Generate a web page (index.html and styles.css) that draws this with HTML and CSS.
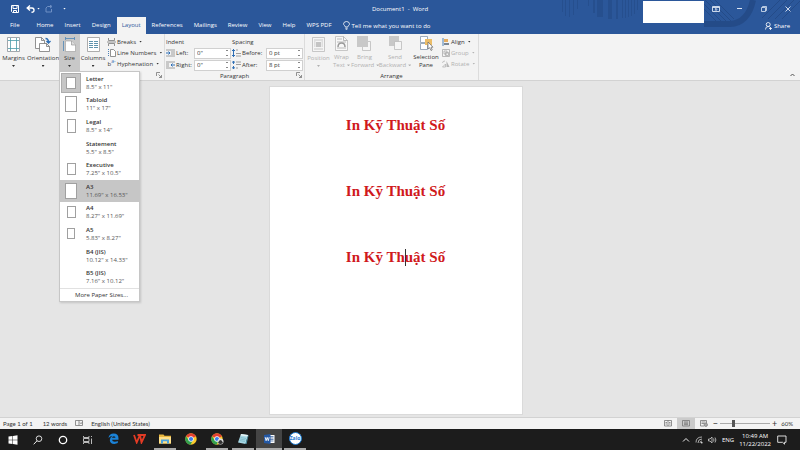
FILE: index.html
```html
<!DOCTYPE html>
<html lang="en">
<head>
    <meta charset="UTF-8">
    <meta name="viewport" content="width=device-width, initial-scale=1.0">
    <title>Document1 - Word</title>
    <link rel="stylesheet" href="styles.css">
</head>
<body>
    <header class="app-header">
        <svg class="header-art" viewBox="0 0 250 34" aria-hidden="true">
            <g stroke="#264f8e">
                <path d="M12.500 0v12M15.500 0v16M19.500 0v17M23.500 0v15M27.500 0v9M38.500 0v6M72.500 0v18M75.500 0v18M78.500 0v17M81.500 0v16M84.500 0v14M87.500 0v10"/>
                <path stroke-width="6" d="M50 0v17"/>
                <path stroke-width="4" d="M60 0v19"/>
                <path stroke-width="2" d="M44 0v13M67 0v19"/>
            </g>
            <path fill="none" stroke="#244b88" stroke-width="6" d="M154 24h26q18-1 23-24"/>
            <path stroke="#244b88" d="M154 9l13 13M154 4l18 18M155 0l22 22M160 0l21 21M165 0l19 19M212 18L230 0M218 19L237 0M225 19L244 0M232 19L250 1"/>
        </svg>
        <div class="account-box"></div>

        <div class="title-bar">
            <div class="quick-access">
                <button type="button" aria-label="Save"><svg width="8" height="8" viewBox="0 0 8 8"><path fill="none" stroke="#fff" d="M.5.5h7v7h-6l-1-1zM2 1v2.500h4V1M2.500 7.500V5.500h3v2"/></svg></button>
                <button type="button" class="undo" aria-label="Undo"><svg width="9" height="8" viewBox="0 0 9 8"><path fill="none" stroke="#fff" stroke-width="1.400" d="M4 .5L1.200 3 4 5.500M1.500 3H6q2 0 2 2.200T5.500 7.300"/></svg><i class="caret"></i></button>
                <button type="button" class="redo" aria-label="Repeat"><svg width="8" height="8" viewBox="0 0 8 8"><path fill="none" stroke="#6f90c4" d="M6 1.500H2.500L1 3v4h5.500V4M5 0l2 1.500L5 3"/></svg></button>
                <button type="button" class="customize" aria-label="Customize Quick Access Toolbar"><i class="caret"></i></button>
            </div>
            <div class="doc-title">Document1&nbsp; -&nbsp; Word</div>
            <div class="window-buttons">
                <button type="button" aria-label="Ribbon Display Options"><svg width="8" height="8" viewBox="0 0 8 8"><path fill="none" stroke="#dce5f3" d="M.5 1.500h7v5h-7zM.5 2.500h7M4 6V3.500M2.800 4.700L4 3.500l1.200 1.200" stroke-width=".9"/></svg></button>
                <button type="button" aria-label="Minimize"><svg width="8" height="8" viewBox="0 0 8 8"><path stroke="#dce5f3" d="M1 3.500h5"/></svg></button>
                <button type="button" aria-label="Restore Down"><svg width="8" height="8" viewBox="0 0 8 8"><path fill="none" stroke="#dce5f3" stroke-width=".8" d="M1.500 2.500h4v4h-4zM2.500 2.500v-1h4v4h-1"/></svg></button>
                <button type="button" aria-label="Close"><svg width="8" height="8" viewBox="0 0 8 8"><path stroke="#dce5f3" stroke-width=".9" d="M1.500 1.500l5 5M6.500 1.500l-5 5"/></svg></button>
            </div>
        </div>

        <nav class="tabs">
            <a href="#file" class="file-tab">File</a>
            <a href="#home">Home</a>
            <a href="#insert">Insert</a>
            <a href="#design">Design</a>
            <a href="#layout" class="active">Layout</a>
            <a href="#references">References</a>
            <a href="#mailings">Mailings</a>
            <a href="#review">Review</a>
            <a href="#view">View</a>
            <a href="#help">Help</a>
            <a href="#wps">WPS PDF</a>
            <button type="button" class="tell-me"><svg width="7" height="9" viewBox="0 0 7 9"><path fill="none" stroke="#fff" stroke-width=".8" d="M2.300 6Q2.200 5 1.300 4.300.5 3.500.5 2.900.8.500 3.500.500T6.500 2.900q0 .9-.8 1.600Q4.800 5 4.700 6zM2.300 7.200h2.400M2.700 8.300h1.600"/></svg>Tell me what you want to do</button>
            <button type="button" class="share"><svg width="7" height="8" viewBox="0 0 7 8"><g fill="none" stroke="#fff" stroke-width=".8"><circle cx="3.200" cy="2.500" r="2"/><path d="M.5 7.500q0-3 2.700-3 1.300 0 2 .8M4 6.500h3M5.500 5v3"/></g></svg>Share</button>
        </nav>
    </header>

    <section class="ribbon">
        <div class="group page-setup">
            <div class="group-body">
                <button type="button" class="big margins"><svg width="13" height="15" viewBox="0 0 13 15"><path fill="#fff" stroke="#8b9299" stroke-width=".8" d="M.5.500h12v14H.500z"/><path fill="none" stroke="#4a9aa8" stroke-width=".8" d="M3.500 1v13M9.500 1v13M1 3.500h11M1 11.500h11"/></svg>Margins<i class="caret"></i></button>
                <button type="button" class="big orientation"><svg width="16" height="15" viewBox="0 0 16 15"><path fill="#fff" stroke="#777" stroke-width=".8" d="M.5.500h6l3 3v8h-9zM6.500.500v3h3"/><path fill="#fff" stroke="#777" stroke-width=".8" d="M4.500 6.500h7l3 3v5h-10zM11.500 6.500v3h3"/><path fill="none" stroke="#2f6fb5" stroke-width="1.400" d="M10.500 1.500q3 0 3 4M11.500 4l2 2 2-2"/></svg>Orientation<i class="caret"></i></button>
                <div class="size-control">
                    <button type="button" class="big size" aria-expanded="true"><svg width="13" height="15" viewBox="0 0 13 15"><path fill="none" stroke="#4e86b8" stroke-width=".8" d="M2.500 1.500h9M2.500 0v3M11.500 0v3M.5 4v10"/><path fill="#fff" stroke="#999" stroke-width=".6" d="M2.500 4h6l4 4v6.500h-10z"/><path fill="#ddd" stroke="#888" stroke-width=".6" d="M8.500 4v4h4"/></svg>Size<i class="caret"></i></button>
                    <div class="size-menu">
                        <ul>
                            <li><button type="button" class="current"><span class="thumb"><i class="paper letter"></i></span><span class="info"><b>Letter</b>8.5" x 11"</span></button></li>
                            <li><button type="button"><span class="thumb"><i class="paper tabloid"></i></span><span class="info"><b>Tabloid</b>11" x 17"</span></button></li>
                            <li><button type="button"><span class="thumb"><i class="paper legal"></i></span><span class="info"><b>Legal</b>8.5" x 14"</span></button></li>
                            <li><button type="button"><span class="thumb"></span><span class="info"><b>Statement</b>5.5" x 8.5"</span></button></li>
                            <li><button type="button"><span class="thumb"><i class="paper executive"></i></span><span class="info"><b>Executive</b>7.25" x 10.5"</span></button></li>
                            <li><button type="button" class="hovered"><span class="thumb"><i class="paper tabloid"></i></span><span class="info"><b>A3</b>11.69" x 16.53"</span></button></li>
                            <li><button type="button"><span class="thumb"><i class="paper executive"></i></span><span class="info"><b>A4</b>8.27" x 11.69"</span></button></li>
                            <li><button type="button"><span class="thumb"><i class="paper a5"></i></span><span class="info"><b>A5</b>5.83" x 8.27"</span></button></li>
                            <li><button type="button"><span class="thumb"></span><span class="info"><b>B4 (JIS)</b>10.12" x 14.33"</span></button></li>
                            <li><button type="button"><span class="thumb"></span><span class="info"><b>B5 (JIS)</b>7.16" x 10.12"</span></button></li>
                        </ul>
                        <button type="button" class="more-sizes">More Paper Sizes...</button>
                    </div>
                </div>
                <button type="button" class="big columns"><svg width="13" height="15" viewBox="0 0 13 15"><path fill="#fff" stroke="#999" stroke-width=".8" d="M.5.500h12v14H.500z"/><path stroke="#5f93ad" d="M2 4.500h4M2 6.500h4M2 8.500h4M2 10.500h4M7 4.500h4M7 6.500h4M7 8.500h4M7 10.500h4"/></svg>Columns<i class="caret"></i></button>
                <div class="stack">
                    <button type="button"><svg width="9" height="8" viewBox="0 0 9 8"><path fill="none" stroke="#777" stroke-width=".8" d="M1.500 0v2.500h6V0M1.500 8V5.500h6V8M0 4h9"/></svg>Breaks<i class="caret"></i></button>
                    <button type="button"><svg width="9" height="8" viewBox="0 0 9 8"><path fill="#fff" stroke="#777" stroke-width=".8" d="M3.500.500h3l2 2v5h-5z"/><path stroke="#4f82b5" stroke-dasharray="1 1" d="M1.500 0v8"/></svg>Line Numbers<i class="caret"></i></button>
                    <button type="button"><span class="bc-icon" aria-hidden="true">b<sup>a-</sup></span>Hyphenation<i class="caret"></i></button>
                </div>
            </div>
            <div class="group-title"><button type="button" class="launcher" aria-label="Page Setup"><svg width="6" height="6" viewBox="0 0 6 6"><path fill="none" stroke="#777" stroke-width=".8" d="M.5 4V.500H4M2.500 2.500l3 3M5.500 3v2.500H3"/></svg></button></div>
        </div>

        <div class="group paragraph">
            <div class="group-body">
                <div class="fields indent">
                    <h2>Indent</h2>
                    <div class="field">
                        <svg width="9" height="8" viewBox="0 0 9 8"><path stroke="#888" stroke-width=".8" d="M0 1h9M5 3h4M5 5h4M0 7h9"/><path stroke="#2f6fb5" d="M0 4h4M2.500 2.500L4 4 2.500 5.500" fill="none"/></svg>
                        <label for="left">Left:</label>
                        <span class="spin"><input type="text" id="left" value='0"'><i></i></span>
                    </div>
                    <div class="field">
                        <svg width="9" height="8" viewBox="0 0 9 8"><path stroke="#888" stroke-width=".8" d="M0 1h9M0 3h3M0 5h3M0 7h9"/><path stroke="#2f6fb5" d="M9 4H5M6.500 2.500L5 4l1.500 1.500" fill="none"/></svg>
                        <label for="right">Right:</label>
                        <span class="spin"><input type="text" id="right" value='0"'><i></i></span>
                    </div>
                </div>
                <div class="fields spacing">
                    <h2>Spacing</h2>
                    <div class="field">
                        <svg width="9" height="8" viewBox="0 0 9 8"><path stroke="#888" stroke-width=".8" d="M4 1h2M4 4.500h5M4 7h5"/><path fill="none" stroke="#2f6fb5" d="M1.500 0v8M0 2l1.500-1.500L3 2M0 6l1.500 1.500L3 6"/></svg>
                        <label for="before">Before:</label>
                        <span class="spin"><input type="text" id="before" value="0 pt"><i></i></span>
                    </div>
                    <div class="field">
                        <svg width="9" height="8" viewBox="0 0 9 8"><path stroke="#888" stroke-width=".8" d="M4 1h5M4 3.500h5M4 7h2"/><path fill="none" stroke="#2f6fb5" d="M1.500 0v3M0 1.500L1.500.300 3 1.500M1.500 5v3M0 6.500l1.500 1 1.500-1"/></svg>
                        <label for="after">After:</label>
                        <span class="spin"><input type="text" id="after" value="8 pt"><i></i></span>
                    </div>
                </div>
            </div>
            <div class="group-title">Paragraph<button type="button" class="launcher" aria-label="Paragraph Settings"><svg width="6" height="6" viewBox="0 0 6 6"><path fill="none" stroke="#777" stroke-width=".8" d="M.5 4V.500H4M2.500 2.500l3 3M5.500 3v2.500H3"/></svg></button></div>
        </div>

        <div class="group arrange">
            <div class="group-body">
                <button type="button" class="big position" disabled><svg width="13" height="15" viewBox="0 0 13 15"><path fill="#f5f5f5" stroke="#bbb" stroke-width=".8" d="M.5.500h12v14H.500z"/><path stroke="#bbb" stroke-width=".8" d="M2 3h9M2 5h1.500M9.500 5H11M2 7h1.500M9.500 7H11M2 9h1.500M9.500 9H11M2 12h9"/><path fill="#c4c4c4" d="M4 5h5v5H4z"/></svg>Position<i class="caret"></i></button>
                <button type="button" class="big two-line wrap" disabled><svg width="13" height="15" viewBox="0 0 13 15"><path fill="#f8f8f8" stroke="#bbb" stroke-width=".8" d="M.5.500h8l4 4v10H.500z"/><path fill="none" stroke="#aaa" stroke-width=".8" d="M8.500.500v4h4M2 3h5M2 6h9M2 12h9"/><path fill="none" stroke="#999" stroke-width="1.500" d="M3 11q0-4 3.500-4t3.500 4"/></svg>Wrap<br>Text<i class="caret side"></i></button>
                <button type="button" class="big two-line bring" disabled><svg width="15" height="15" viewBox="0 0 15 15"><path fill="#f5f5f5" stroke="#bbb" stroke-width=".8" d="M5.500 5.500h8v9h-8z"/><path fill="#c8c8c8" d="M0 0h11v11H0z"/></svg>Bring<br>Forward<i class="caret side"></i></button>
                <button type="button" class="big two-line send" disabled><svg width="15" height="15" viewBox="0 0 15 15"><path fill="#c8c8c8" d="M1 0h10v10H1z"/><path fill="#f5f5f5" stroke="#bbb" stroke-width=".8" d="M6.500 5.500h7v8h-7z"/></svg>Send<br>Backward<i class="caret side"></i></button>
                <button type="button" class="big two-line selection"><svg width="15" height="15" viewBox="0 0 15 15"><path fill="#fff" stroke="#8798ab" stroke-width=".8" d="M1.500.500h7v6h-7zM1.500 7.500h7v6h-7z"/><path fill="#ebbd68" d="M6 3h7v6H6z"/><path fill="#fff" stroke="#666" stroke-width=".7" d="M9 6v7l1.700-1.300L12 14.500l1.200-.6-1.200-2.700h2z"/></svg>Selection<br>Pane</button>
                <div class="stack">
                    <button type="button"><svg width="8" height="8" viewBox="0 0 8 8"><path stroke="#4f82b5" d="M1 0v8"/><path fill="#e6ad5e" d="M2 1h4v3H2z"/><path fill="#7b8794" d="M2 5h5v2H2z"/></svg>Align<i class="caret"></i></button>
                    <button type="button" disabled><svg width="8" height="8" viewBox="0 0 8 8"><path fill="none" stroke="#aaa" stroke-width=".8" d="M.5.500h7v7h-7zM2 2h3v3H2zM3.500 3.500h3v3h-3z"/></svg>Group<i class="caret"></i></button>
                    <button type="button" disabled><svg width="8" height="8" viewBox="0 0 8 8"><path fill="#b5b5b5" d="M4.500 1v6h3z"/><path fill="none" stroke="#b5b5b5" stroke-width=".8" d="M.5 3q0-2 2.500-2M3.500 4v3h-3z"/></svg>Rotate<i class="caret"></i></button>
                </div>
            </div>
            <div class="group-title">Arrange</div>
        </div>
        <button type="button" class="collapse" aria-label="Collapse the Ribbon"><svg width="5" height="4" viewBox="0 0 5 4"><path fill="none" stroke="#555" d="M.5 3l2-2 2 2"/></svg></button>
    </section>

    <main class="workspace">
        <article class="page">
            <p>In Kỹ Thuật Số</p>
            <p>In Kỹ Thuật Số</p>
            <p>In Kỹ Th<span class="cursor"></span>uật Số</p>
        </article>
    </main>

    <footer class="status-bar">
        <span class="pages">Page 1 of 1</span>
        <span class="words">12 words</span>
        <svg class="proof" width="8" height="7" viewBox="0 0 8 7"><path fill="none" stroke="#777" stroke-width=".8" d="M.5.500h7v5h-7zM4 .5v5M5 2.500l1 1.300 1.500-2"/></svg>
        <span>English (United States)</span>
        <div class="views">
            <button type="button" aria-label="Read Mode"><svg width="8" height="7" viewBox="0 0 8 7"><path fill="none" stroke="#777" stroke-width=".8" d="M.5.500H4v5.500H.500zM4 .5h3.500V6H4M1.500 2.500h1.500M1.500 4h1.500M5 2.500h1.500M5 4h1.500"/></svg></button>
            <button type="button" class="selected" aria-label="Print Layout"><svg width="8" height="7" viewBox="0 0 8 7"><path fill="none" stroke="#777" stroke-width=".8" d="M.5.500h7V6h-7zM2 2h4M2 3.300h4M2 4.600h4"/></svg></button>
            <button type="button" aria-label="Web Layout"><svg width="8" height="7" viewBox="0 0 8 7"><path fill="none" stroke="#777" stroke-width=".8" d="M4 6H.500V.500h6V3M1.500 2h4M1.500 3.500h3"/><circle cx="5.800" cy="4.800" r="1.700" fill="#aaa" stroke="#777" stroke-width=".7"/></svg></button>
        </div>
        <div class="zoom">
            <button type="button" aria-label="Zoom Out">−</button>
            <input type="range" min="10" max="200" value="60" aria-label="Zoom">
            <button type="button" aria-label="Zoom In">+</button>
            <span>60%</span>
        </div>
    </footer>

    <div class="taskbar">
        <button type="button" class="system" aria-label="Start"><svg width="10" height="10" viewBox="0 0 10 10"><path fill="#fff" d="M.500 1.500L4.500 1v3.700h-4zM5 .900L9.500.300v4.400H5zM.500 5.200h4V9l-4-.500zM5 5.200h4.500v4.500L5 9.100z"/></svg></button>
        <button type="button" class="system" aria-label="Search"><svg width="10" height="10" viewBox="0 0 10 10"><circle cx="6" cy="3.700" r="2.800" fill="none" stroke="#eee" stroke-width=".9"/><path stroke="#eee" d="M4 5.800L.700 9.300"/></svg></button>
        <button type="button" class="system" aria-label="Cortana"><svg width="10" height="10" viewBox="0 0 10 10"><circle cx="5" cy="5" r="3.700" fill="none" stroke="#fff" stroke-width="1.300"/></svg></button>
        <button type="button" class="system" aria-label="Task View"><svg width="10" height="10" viewBox="0 0 10 10"><path fill="none" stroke="#ccc" stroke-width=".9" d="M.5 1v1.500H6V1M.5 9V7.500H6V9M.5 3.500H6v3H.500zM8.500 1v1M8.500 3.500V9"/></svg></button>
        <button type="button" class="app" aria-label="Edge"><svg width="11" height="11" viewBox="0 0 11 11"><path fill="#1b83d8" d="M.5 5Q1 .5 5.700.500q4.800 0 4.800 5v1.200H4q.3 2 2.800 2 1.700 0 3-.8v2.200q-1.500.8-3.500.8-4.300 0-4.500-4Q1.800 4.500 4.500 3 2 3 .5 5zM4 4.800h3.500q0-1.600-1.600-1.600T4 4.800z"/></svg></button>
        <button type="button" class="app" aria-label="WPS Office"><svg width="13" height="10" viewBox="0 0 13 10"><path fill="none" stroke="#e33b25" stroke-width="1.800" d="M1 1l2.700 7.500L7 1l1.500 7.500L12 1H4.500"/></svg></button>
        <button type="button" class="app open" aria-label="File Explorer"><svg width="12" height="10" viewBox="0 0 12 10"><path fill="#e8b73f" d="M0 .500h4.500l1 1.200H12V9.500H0z"/><path fill="#ffe08a" d="M0 3h12v6.500H0z"/><path fill="#4ba3dd" d="M2 5.500h8v4H8V7.200H4v2.300H2z"/></svg></button>
        <button type="button" class="app" aria-label="Chrome"><svg width="12" height="12" viewBox="0 0 12 12"><circle cx="6" cy="6" r="5.700" fill="#f9c92d"/><path fill="#e34133" d="M6 6L1 3.200Q2.700.300 6 .300t5 2.900z"/><path fill="#34a24f" d="M1 3.200Q-.700 6 1 9q1.600 2.600 4.500 2.700L7.500 8 3.700 7.300z"/><circle cx="6" cy="6" r="2.700" fill="#fff"/><circle cx="6" cy="6" r="2.100" fill="#3b7ded"/></svg></button>
        <button type="button" class="app open" aria-label="Chrome profile"><svg width="13" height="12" viewBox="0 0 13 12"><circle cx="6" cy="6" r="5.700" fill="#f9c92d"/><path fill="#e34133" d="M6 6L1 3.200Q2.700.300 6 .300t5 2.900z"/><path fill="#34a24f" d="M1 3.200Q-.700 6 1 9q1.600 2.600 4.500 2.700L7.500 8 3.700 7.300z"/><circle cx="6" cy="6" r="2.700" fill="#fff"/><circle cx="6" cy="6" r="2.100" fill="#3b7ded"/><circle cx="9.500" cy="8.500" r="3" fill="#ddd"/><path fill="#333" d="M7 10q1-3 2.500-3t2.500 3q-2.500 2-5 0z"/></svg></button>
        <button type="button" class="app open" aria-label="Notepad"><svg width="12" height="12" viewBox="0 0 12 12"><path fill="#a8d8e5" d="M4 1l7 1-2.500 9L1 9.500z"/><path fill="#4d98ad" d="M11 2l.5.800L9.500 11h-1z"/><path fill="#e5f4f5" d="M4 1l7 1-.4 1.500-7-1z"/><path stroke="#6cacbc" stroke-width=".6" d="M3.500 4.500l5.500 1M3 6l5.500 1M2.500 7.500l5.500 1"/></svg></button>
        <button type="button" class="app open word" aria-label="Word"><svg width="11" height="10" viewBox="0 0 11 10"><path fill="#fff" d="M5 1h5.500v8H5z"/><path stroke="#2b5797" stroke-width=".7" d="M6 2.500h3.500M6 4h3.500M6 5.500h3.500M6 7h3.500"/><path fill="#2459a6" d="M0 1l6.500-1v10L0 9z"/><path fill="none" stroke="#fff" stroke-width=".9" d="M1.200 3.200l.9 3.500 1.100-3.300 1.100 3.300.9-3.500"/></svg></button>
        <button type="button" class="app open zalo"><span>Zalo</span></button>

        <div class="tray">
            <button type="button" aria-label="Show hidden icons"><svg width="8" height="8" viewBox="0 0 8 8"><path fill="none" stroke="#eee" d="M1 5.500l3-3 3 3"/></svg></button>
            <button type="button" aria-label="Network"><svg width="8" height="8" viewBox="0 0 8 8"><path fill="none" stroke="#bbb" stroke-width=".9" d="M1 6.500Q1 1 7 1M3 7q0-4 4-4M5 7q0-2 2-2"/><circle cx="6.800" cy="6.800" r=".8" fill="#fff"/></svg></button>
            <button type="button" aria-label="Volume"><svg width="9" height="8" viewBox="0 0 9 8"><path fill="none" stroke="#ccc" stroke-width=".8" d="M.5 3v2H2l2 2V1L2 3zM5.500 2.500q1 1.500 0 3M7 1.500q1.800 2.500 0 5"/></svg></button>
            <span class="lang">ENG</span>
            <div class="clock"><time>10:49 AM</time><time>11/22/2022</time></div>
            <button type="button" class="notifications" aria-label="Notifications"><svg width="10" height="10" viewBox="0 0 10 10"><path fill="none" stroke="#eee" stroke-width=".9" d="M.7 1h8.300v6.300H7.500v1.900L5.600 7.300H.700z"/></svg></button>
        </div>
    </div>
</body>
</html>
```
FILE: styles.css
```css
* {
    margin: 0;
    padding: 0;
    box-sizing: border-box;
}

body {
    font-family: 'Open Sans', 'Segoe UI', sans-serif;
    font-size: 6px;
    line-height: 8px;
    color: #333;
    background: #e5e5e5;
    height: 100vh;
    display: flex;
    flex-direction: column;
    overflow: hidden;
}

button,
input {
    font: inherit;
    color: inherit;
    background: none;
    border: none;
}

button {
    display: flex;
    align-items: center;
    white-space: nowrap;
}

svg {
    display: block;
    flex: none;
}

a {
    color: inherit;
    text-decoration: none;
}

ul {
    list-style: none;
}

.caret {
    width: 3px;
    height: 2px;
    background: currentColor;
    clip-path: polygon(0 0, 100% 0, 50% 100%);
    margin-left: 2px;
    flex: none;
}

/* title bar and tabs */
.app-header {
    position: relative;
    background: #2b579a;
    color: #fff;
    flex: none;
}

.header-art {
    position: absolute;
    top: 0;
    right: 0;
    width: 250px;
    height: 34px;
}

.account-box {
    position: absolute;
    top: 1px;
    right: 96px;
    width: 61px;
    height: 22px;
    background: #fff;
    z-index: 1;
}

.title-bar {
    position: relative;
    display: grid;
    grid-template-columns: 1fr auto 1fr;
    align-items: center;
    height: 17px;
}

.quick-access {
    display: flex;
    align-items: center;
    gap: 8px;
    padding-left: 11px;
}

.undo {
    margin-left: -1px;
}

.redo {
    margin-left: -3px;
}

.window-buttons {
    display: flex;
    justify-content: flex-end;
    gap: 16px;
    padding-right: 8px;
}

.tabs {
    position: relative;
    display: flex;
    align-items: center;
    gap: 1px;
    height: 17px;
    padding-left: 5px;
    padding-right: 10px;
}

.tabs a {
    padding: 0 5px;
    line-height: 17px;
}

.tabs .file-tab {
    margin-right: 6px;
}

.tabs .active {
    background: #f3f3f3;
    color: #2b579a;
}

.tell-me {
    gap: 2px;
    margin-left: 5px;
}

.share {
    gap: 2px;
    margin-left: auto;
}

/* ribbon */
.ribbon {
    display: flex;
    height: 47px;
    background: #f3f3f3;
    border-bottom: 1px solid #d2d2d2;
    flex: none;
}

.group {
    display: flex;
    flex-direction: column;
    border-right: 1px solid #dcdcdc;
}

.group-body {
    display: flex;
    height: 37px;
}

.group-title {
    display: flex;
    align-items: center;
    justify-content: center;
    position: relative;
    height: 9px;
}

.launcher {
    position: absolute;
    right: 2px;
    top: 1px;
}

.big {
    display: block;
    flex: none;
    text-align: center;
    padding: 3px 0 4px;
    height: 37px;
}

.big svg {
    margin: 0 auto 2px;
}

.big .caret {
    display: block;
    margin: 3px auto 0;
}

.big .side {
    display: inline-block;
    vertical-align: middle;
    margin: 0 0 0 2px;
}

.two-line {
    padding: 2px 0;
}

button:disabled {
    color: #b1b1b1;
}

.margins {
    width: 27px;
}

.orientation {
    width: 32px;
}

.size {
    width: 21px;
    background: #c8c8c8;
}

.columns {
    width: 26px;
}

.position,
.bring {
    width: 27px;
}

.wrap {
    width: 19px;
}

.send {
    width: 34px;
}

.selection {
    width: 28px;
}

.stack {
    display: flex;
    flex-direction: column;
    padding: 2px 4px 0 1px;
}

.stack button {
    height: 11px;
    gap: 1px;
}

.bc-icon {
    display: block;
    width: 9px;
    line-height: 8px;
}

.bc-icon sup {
    font-size: 5px;
    line-height: 1px;
    color: #2f6fb5;
}

.page-setup {
    width: 165px;
}

.paragraph {
    width: 140px;
}

.arrange {
    width: 174px;
}

.arrange .stack {
    padding-left: 2px;
}

.fields {
    padding: 3px 0 0 1px;
}

.fields h2 {
    font-size: 6px;
    font-weight: 400;
    line-height: 10px;
}

.field {
    display: flex;
    align-items: center;
    gap: 1px;
    height: 12px;
}

.field label {
    flex: 1;
}

.indent {
    width: 66px;
}

.spacing {
    width: 72px;
}

.spin {
    display: flex;
    align-items: center;
    justify-content: space-between;
    width: 37px;
    height: 11px;
    padding: 0 2px;
    background: #fff;
    border: 1px solid #d0d0d0;
}

.spin input {
    width: 24px;
    height: 9px;
}

.spin i {
    width: 2px;
    height: 6px;
    border-top: 1px solid #888;
    border-bottom: 1px solid #888;
}

.collapse {
    margin: auto 5px 3px auto;
}

/* paper size menu */
.size-control {
    position: relative;
}

.size-menu {
    position: absolute;
    top: 37px;
    left: 0;
    width: 81px;
    background: #fff;
    border: 1px solid #c6c6c6;
    box-shadow: 1px 1px 2px rgba(0, 0, 0, 0.15);
    z-index: 2;
}

.size-menu ul {
    display: grid;
    grid-template-rows: repeat(10, 1fr);
    height: 216px;
}

.size-menu li button {
    width: 100%;
    height: 100%;
    text-align: left;
}

.thumb {
    display: flex;
    align-items: center;
    justify-content: center;
    width: 20px;
    height: 20px;
    margin-left: 1px;
}

.current .thumb {
    background: #c6c6c6;
    border: 1px solid #adadad;
}

.size-menu .hovered {
    background: #c6c6c6;
}

.info {
    margin-left: 5px;
    color: #555;
}

.info b {
    display: block;
    font-weight: 600;
    color: #333;
}

.paper {
    background: #fff;
    border: 1px solid #a0a0a0;
}

.letter {
    width: 10px;
    height: 12px;
}

.tabloid {
    width: 12px;
    height: 16px;
}

.legal {
    width: 9px;
    height: 14px;
}

.executive {
    width: 9px;
    height: 12px;
}

.a5 {
    width: 8px;
    height: 11px;
}

.size-menu .more-sizes {
    width: 100%;
    height: 13px;
    padding-left: 15px;
    border-top: 1px solid #e1e1e1;
}

/* document */
.workspace {
    flex: 1;
    display: flex;
    justify-content: center;
    padding: 5px 9px 2px 0;
}

.page {
    width: 254px;
    padding-top: 5px;
    background: #fff;
    border: 1px solid #dadada;
    text-align: center;
    font-family: 'Liberation Serif', 'Times New Roman', serif;
    font-size: 15px;
    font-weight: 700;
    line-height: 66px;
    color: #d0191c;
}

.cursor {
    position: relative;
}

.cursor::after {
    content: '';
    position: absolute;
    top: 0;
    left: 0;
    width: 1px;
    height: 17px;
    background: #333;
}

/* status bar */
.status-bar {
    display: flex;
    align-items: center;
    height: 12px;
    padding: 0 7px 0 3px;
    background: #f3f3f3;
    border-top: 1px solid #d2d2d2;
    font-family: Lato, sans-serif;
    flex: none;
}

.pages {
    margin-right: 10px;
}

.words,
.proof {
    margin-right: 8px;
}

.views {
    display: flex;
    margin-left: auto;
}

.views button {
    justify-content: center;
    width: 18px;
    height: 11px;
}

.views .selected {
    background: #cbcbcb;
}

.zoom {
    display: flex;
    align-items: center;
    gap: 2px;
}

.zoom button {
    font-size: 9px;
}

.zoom span {
    margin-left: 2px;
}

.zoom input {
    appearance: none;
    width: 50px;
    height: 8px;
    background: linear-gradient(#aaa, #aaa) center / 100% 1px no-repeat;
}

.zoom input::-webkit-slider-thumb {
    appearance: none;
    width: 3px;
    height: 7px;
    background: #555;
}

/* taskbar */
.taskbar {
    display: flex;
    height: 21px;
    background: #1c1c1c;
    color: #fff;
    flex: none;
}

.taskbar button {
    justify-content: center;
}

.system {
    width: 25px;
}

.app {
    width: 26px;
    border-left: 2px solid transparent;
    border-right: 2px solid transparent;
    border-bottom: 2px solid transparent;
}

.open {
    border-image: linear-gradient(#aaa, #aaa) 1;
    border-width: 0 0 2px;
    width: 22px;
    margin: 0 2px;
}

.word {
    width: 26px;
    margin: 0;
    background: #444;
}

.zalo span {
    width: 13px;
    height: 13px;
    border-radius: 50%;
    background: #fff;
    border: 1px solid #1b78d0;
    color: #1b78d0;
    font-size: 5px;
    font-weight: 700;
    line-height: 10px;
    text-align: center;
}

.tray {
    display: flex;
    align-items: center;
    gap: 5px;
    margin-left: auto;
    padding-right: 13px;
}

.clock {
    display: flex;
    flex-direction: column;
    align-items: center;
}

.notifications {
    margin-left: 1px;
}
```
